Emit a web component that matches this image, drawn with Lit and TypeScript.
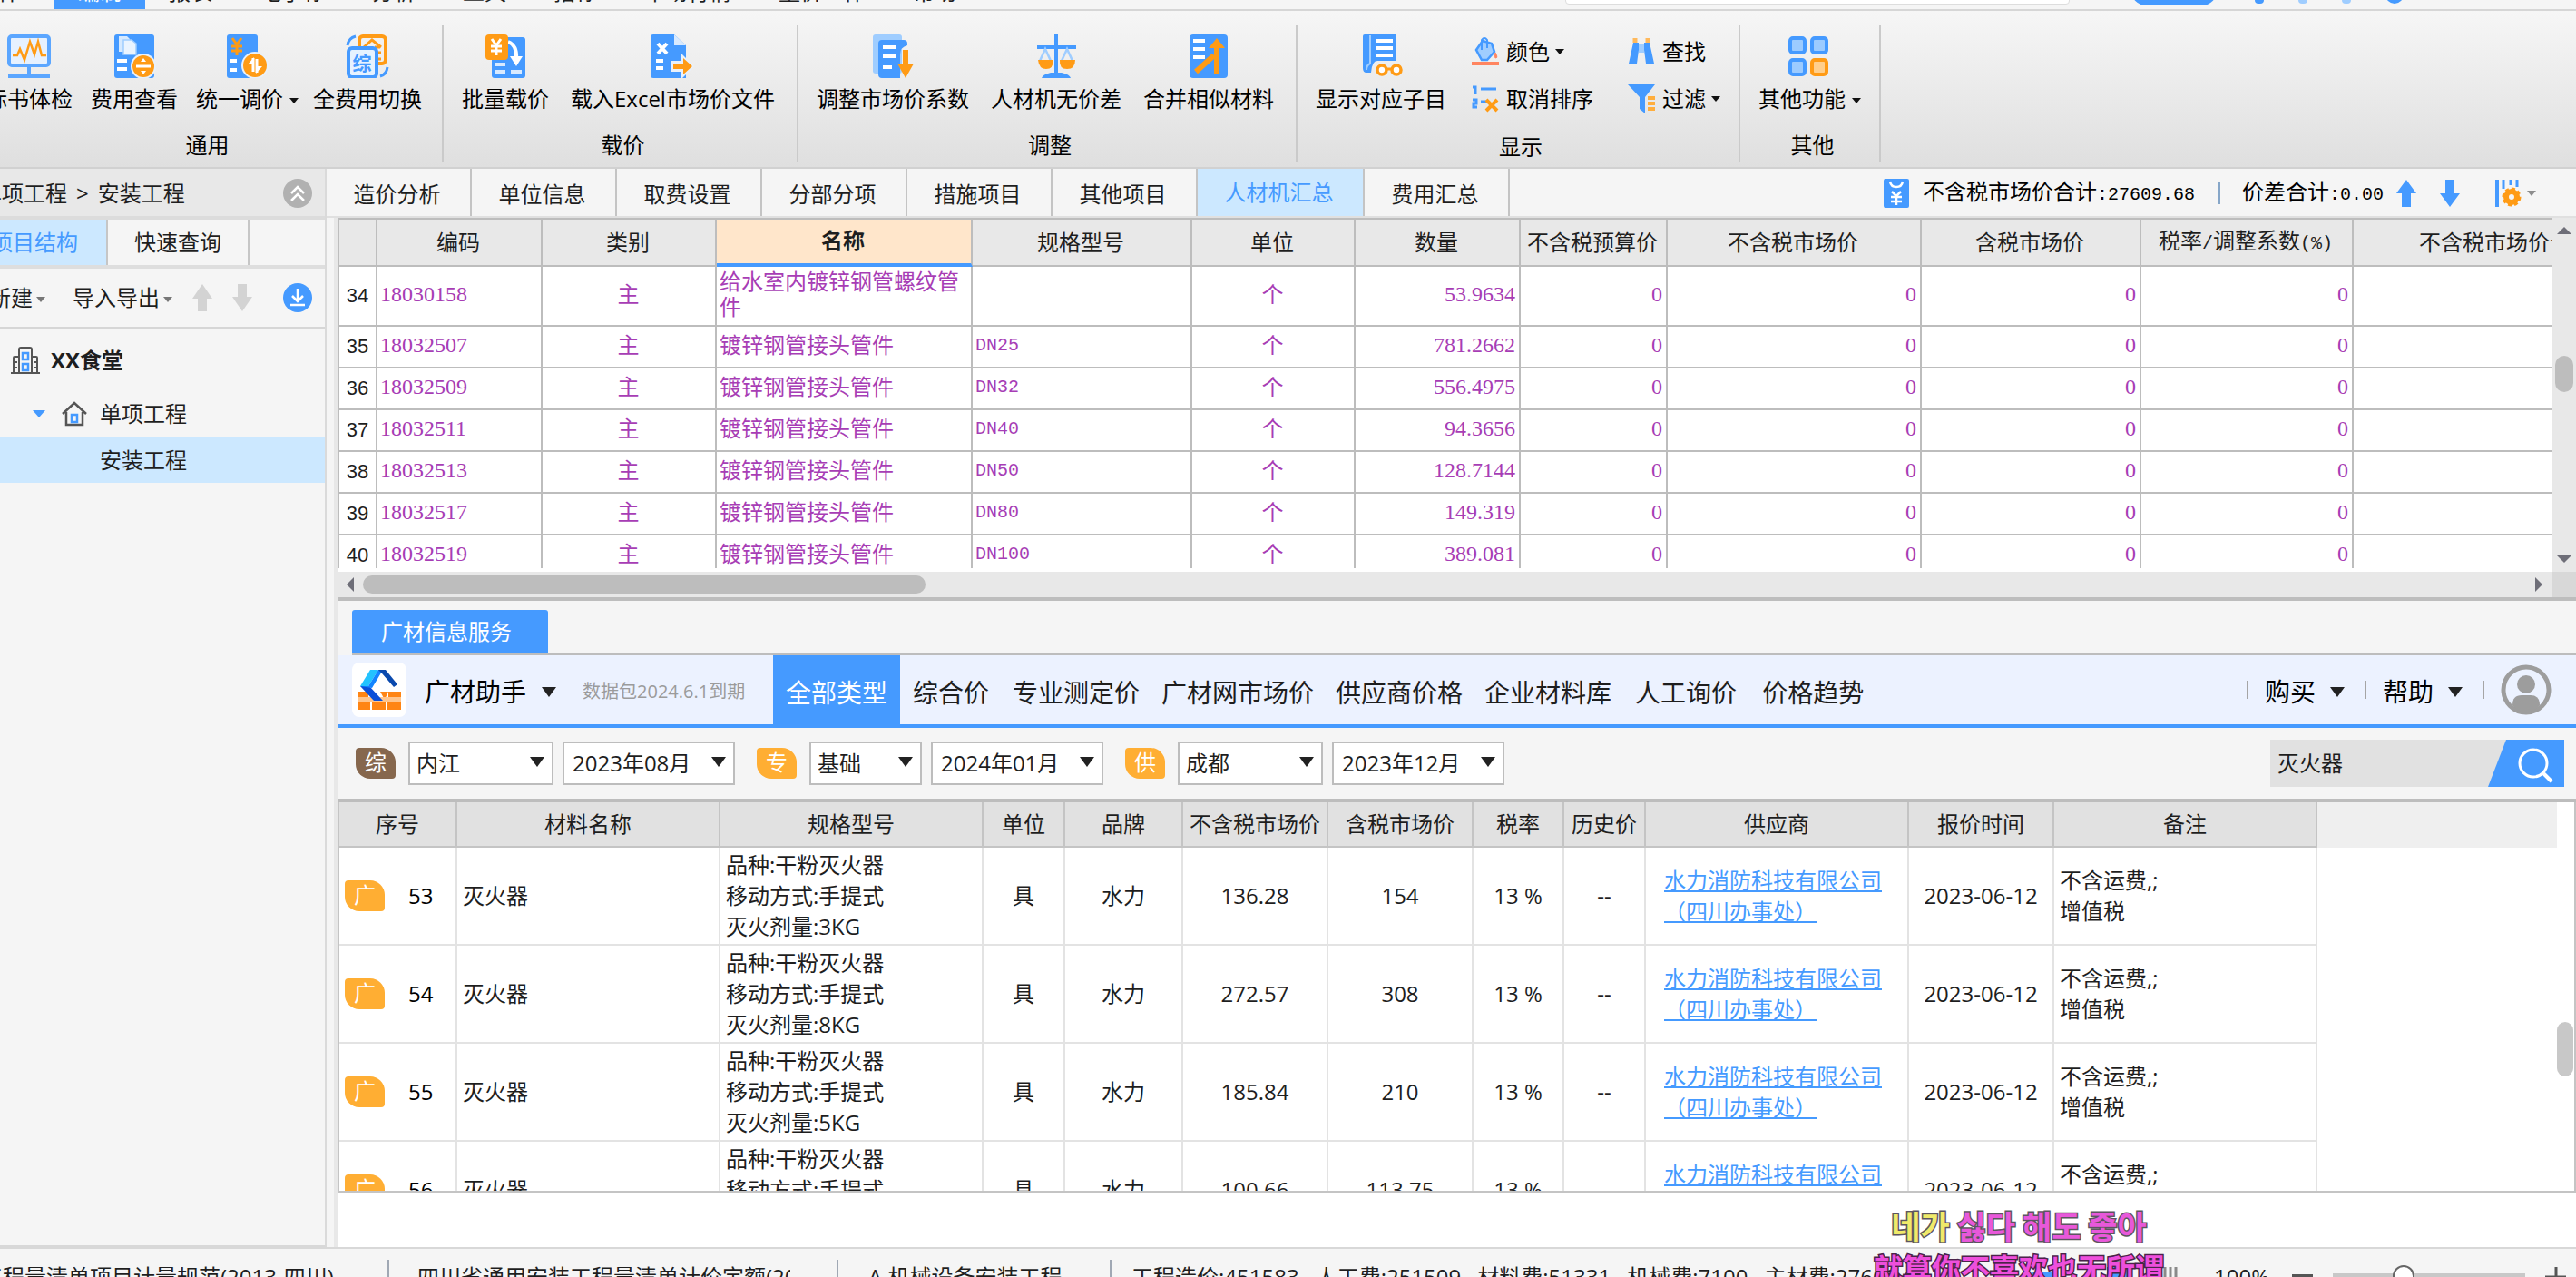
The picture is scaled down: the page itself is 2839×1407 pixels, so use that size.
import { LitElement, html, css, svg, nothing, TemplateResult } from "lit";
import { customElement } from "lit/decorators.js";
import { classMap } from "lit/directives/class-map.js";

const B = "#459aff";
const L = "#9fcdff";
const O = "#ff9b15";

const big = (body: TemplateResult) =>
  html`<svg class="ico" viewBox="0 0 48 48" width="48" height="48" aria-hidden="true">${body}</svg>`;

const ICONS: Record<string, TemplateResult> = {
  check: svg`<rect x="2" y="2" width="44" height="32" rx="3" fill="#e6f1ff" stroke="#5ba6ff" stroke-width="4"/>
    <path d="M6 23h5l3-7 5 12 6-20 5 14 4-14 4 15h5" fill="none" stroke="${O}" stroke-width="2.5"/>
    <path d="M24 36v10M1 46h46" stroke="#5ba6ff" stroke-width="4" fill="none"/>`,
  view: svg`<rect x="2" y="0" width="44" height="48" rx="3" fill="${B}"/>
    <path d="M7 2h9l3 3v14H7z" fill="#d5e9ff"/><path d="M12 6h9l5 4v12H12z" fill="#eaf4ff" stroke="${L}" stroke-width="1.5"/>
    <path d="M5 29h11M5 38h11" stroke="#fff" stroke-width="4"/>
    <circle cx="34" cy="35" r="14" fill="#e9f1fa"/><circle cx="34" cy="35" r="12" fill="${O}"/>
    <path d="M26 35h16" stroke="#fff" stroke-width="3"/><path d="M34 26l3 4h-6zM34 44l3-4h-6z" fill="#fff"/>`,
  unify: svg`<rect x="1" y="0" width="34" height="48" rx="3" fill="${B}"/>
    <path d="M7 4l5 7 5-7M12 11v12M6 13h12M6 18h12" fill="none" stroke="${O}" stroke-width="3"/>
    <path d="M5 29h7M5 39h7" stroke="#fff" stroke-width="4"/>
    <circle cx="32" cy="34" r="15" fill="#e9f1fa"/><circle cx="32" cy="34" r="13" fill="${O}"/>
    <path d="M30 26v15M34 42V27" stroke="#fff" stroke-width="3"/><path d="M31 25v8h-7zM33 43v-8h7z" fill="#fff"/>`,
  swap: svg`<rect x="15" y="2" width="29" height="30" rx="4" fill="none" stroke="${O}" stroke-width="4"/>
    <path d="M20 14l9-8 10 8M32 14h6M34 20h5M34 27h5" fill="none" stroke="${O}" stroke-width="3"/>
    <path d="M2 12Q3 4 11 2M46 36q-1 8-8 10" fill="none" stroke="${B}" stroke-width="3"/>
    <rect x="3" y="15" width="31" height="32" rx="4" fill="#e6f2ff" stroke="${B}" stroke-width="4"/>
    <text x="18" y="39" text-anchor="middle" font-size="21" font-weight="700" fill="${B}">综</text>`,
  batch: svg`<rect x="9" y="3" width="37" height="45" rx="3" fill="${B}"/>
    <path d="M12 33h12M12 41h12M30 41h12" stroke="#d8eaff" stroke-width="4"/>
    <path d="M27 8q10 4 9 18" fill="none" stroke="#fff" stroke-width="4"/><path d="M29 24h14l-7 11z" fill="#fff"/>
    <rect x="2" y="0" width="25" height="28" rx="4" fill="${O}"/>
    <path d="M9 5l5 7 5-7M14 12v11M8 13h12M8 18h12" fill="none" stroke="#fff" stroke-width="3"/>`,
  excel: svg`<path d="M3 0h23l13 12v36H3q-3 0-3-3V3q0-3 3-3z" fill="${B}"/><path d="M26 0l13 12H26z" fill="#d8eaff"/>
    <path d="M8 10l10 11M18 10L8 21" stroke="#fff" stroke-width="4"/>
    <path d="M6 29h8M6 37h8" stroke="#fff" stroke-width="4"/>
    <path d="M22 29h12v-8l14 14-14 14v-8H22z" fill="#e9f1fa"/><path d="M25 32h11v-6l10 9-10 9v-6H25z" fill="${O}"/>`,
  adjust: svg`<rect x="2" y="0" width="32" height="43" rx="3" fill="${L}"/><path d="M12 6h24q4 0 4 4v2q-8 2-8 10v26H12q-4 0-4-4V10q0-4 4-4z" fill="${B}"/>
    <path d="M13 14h14M13 24h14M13 36h10" stroke="#fff" stroke-width="4"/>
    <path d="M38 17v18" stroke="${O}" stroke-width="6"/><path d="M29 32h18l-9 16z" fill="${O}"/>`,
  scale: svg`<path d="M24 0v43M3 14h43" stroke="${B}" stroke-width="4"/><path d="M8 48q1-4 10-6h12q9 2 10 6z" fill="${B}"/>
    <path d="M6 29l6-13 6 13M30 29l6-13 6 13" fill="none" stroke="${L}" stroke-width="2.5"/>
    <path d="M4 28h17q0 10-8 10t-9-10zM28 28h17q0 10-9 10t-8-10z" fill="${O}"/>`,
  merge: svg`<rect x="3" y="0" width="42" height="48" rx="4" fill="${B}"/><path d="M7 7h13M7 16h13M7 25h13" stroke="#fff" stroke-width="4"/>
    <path d="M10 41l20-18M33 43V12" fill="none" stroke="${O}" stroke-width="6"/><path d="M24 15h18L33 4z" fill="${O}"/>`,
  book: svg`<path d="M6 0h34q1 0 1 2v27H20q-6 0-7 13H8q-4 0-4-5V2q0-2 2-2z" fill="${B}"/><path d="M12 1v31q-4 2-4 7" fill="none" stroke="${L}" stroke-width="2"/>
    <path d="M19 7h18M19 15h18M19 23h18" stroke="#fff" stroke-width="4"/>
    <circle cx="25" cy="39" r="5" fill="#fff" stroke="${O}" stroke-width="3.5"/><circle cx="41" cy="39" r="5" fill="#fff" stroke="${O}" stroke-width="3.5"/><path d="M29 38h8" stroke="${O}" stroke-width="3"/>`,
  more: svg`<g fill="#9ccbff" stroke="${B}" stroke-width="4"><rect x="3" y="4" width="16" height="16" rx="3"/><rect x="27" y="4" width="16" height="16" rx="3"/><rect x="3" y="28" width="16" height="16" rx="3"/></g>
    <rect x="27" y="28" width="16" height="16" rx="3" fill="#ffcf8c" stroke="${O}" stroke-width="4"/>`,
};

const SMALL: Record<string, TemplateResult> = {
  color: svg`<path d="M5 14L12 4l10 3 3 9-8 9h-6z" fill="${L}" stroke="${B}" stroke-width="2.5"/><path d="M11 14V3q3-4 6 0v9" fill="none" stroke="${B}" stroke-width="2"/><path d="M26 17q3 5 1 6-3 0-1-6" fill="#ff8560" stroke="#ff8560"/><path d="M0 29h30" stroke="#ff8560" stroke-width="4"/>`,
  sort: svg`<path d="M1 3h3v8M1 17h4v4H2v4h4M10 5h17M10 19h8" fill="none" stroke="${B}" stroke-width="3"/><path d="M16 17l12 12M28 17L16 29" stroke="${O}" stroke-width="4"/>`,
  find: svg`<path d="M8 1v5M22 1v5" stroke="#ffb95c" stroke-width="5"/><path d="M6 6h6v4h6V6h6l5 23h-9l-2-15h-6l-2 15H1z" fill="${B}"/><path d="M12 7h6v10h-6z" fill="${L}"/>`,
  filter: svg`<path d="M0 0h30L19 14v18l-6-5V14z" fill="${B}"/><path d="M22 15h8M22 21h8M22 27h8" stroke="#ffae3d" stroke-width="4"/>`,
};

const small = (name: string) =>
  html`<svg viewBox="0 0 30 32" width="30" height="32" aria-hidden="true">${SMALL[name]}</svg>`;

const caret = html`<i class="caret"></i>`;

interface Cmd { icon: string; label: string; drop?: boolean }
interface Group { name: string; cls: string; cmds: Cmd[]; small?: Cmd[][] }

const GROUPS: Group[] = [
  { name: "通用", cls: "first", cmds: [
    { icon: "check", label: "标书体检" }, { icon: "view", label: "费用查看" },
    { icon: "unify", label: "统一调价", drop: true }, { icon: "swap", label: "全费用切换" }] },
  { name: "载价", cls: "", cmds: [{ icon: "batch", label: "批量载价" }, { icon: "excel", label: "载入Excel市场价文件" }] },
  { name: "调整", cls: "", cmds: [
    { icon: "adjust", label: "调整市场价系数" }, { icon: "scale", label: "人材机无价差" }, { icon: "merge", label: "合并相似材料" }] },
  { name: "显示", cls: "", cmds: [{ icon: "book", label: "显示对应子目" }], small: [
    [{ icon: "color", label: "颜色", drop: true }, { icon: "sort", label: "取消排序" }],
    [{ icon: "find", label: "查找" }, { icon: "filter", label: "过滤", drop: true }]] },
  { name: "其他", cls: "", cmds: [{ icon: "more", label: "其他功能", drop: true }] },
];

const MENU = ["文件", "编制", "报表", "电子标", "分析", "工具", "指标", "市场行情", "量价一体", "帮助"];
const TABS = ["造价分析", "单位信息", "取费设置", "分部分项", "措施项目", "其他项目", "人材机汇总", "费用汇总"];

const COLS = [42, 182, 192, 282, 242, 180, 182, 162, 280, 242, 234, 340];
const HEADS = ["", "编码", "类别", "名称", "规格型号", "单位", "数量", "不含税预算价", "不含税市场价", "含税市场价"];
const ROWS: string[][] = [
  ["34", "18030158", "给水室内镀锌钢管螺纹管件", "", "53.9634"],
  ["35", "18032507", "镀锌钢管接头管件", "DN25", "781.2662"],
  ["36", "18032509", "镀锌钢管接头管件", "DN32", "556.4975"],
  ["37", "18032511", "镀锌钢管接头管件", "DN40", "94.3656"],
  ["38", "18032513", "镀锌钢管接头管件", "DN50", "128.7144"],
  ["39", "18032517", "镀锌钢管接头管件", "DN80", "149.319"],
  ["40", "18032519", "镀锌钢管接头管件", "DN100", "389.081"],
];

const PCOLS = [130, 290, 290, 90, 130, 160, 160, 100, 90, 290, 160, 290];
const PHEADS = ["序号", "材料名称", "规格型号", "单位", "品牌", "不含税市场价", "含税市场价", "税率", "历史价", "供应商", "报价时间", "备注"];
const PRICES = [
  ["53", "3KG", "136.28", "154"],
  ["54", "8KG", "272.57", "308"],
  ["55", "5KG", "185.84", "210"],
  ["56", "4KG", "100.66", "113.75"],
];
const TYPES = ["全部类型", "综合价", "专业测定价", "广材网市场价", "供应商价格", "企业材料库", "人工询价", "价格趋势"];
const FILTERS = [
  { tag: "综", name: "综合价", brown: true, w: 160, place: "内江", date: "2023年08月" },
  { tag: "专", name: "专业测定价", brown: false, w: 124, place: "基础", date: "2024年01月" },
  { tag: "供", name: "供应商", brown: false, w: 160, place: "成都", date: "2023年12月" },
];

@customElement("app-root")
export class AppRoot extends LitElement {
  static styles = css`
    :host { display: flex; flex-direction: column; height: 100vh; overflow: hidden; background: #f5f5f5; color: #1e1e1e;
      font: 24px/28px "Open Sans", "Noto Sans CJK SC", sans-serif; white-space: nowrap; }
    * { box-sizing: border-box; }
    button, input, select { font: inherit; color: inherit; background: none; border: 0; padding: 0; margin: 0; border-radius: 0; }
    a { color: inherit; text-decoration: none; }
    svg { display: block; flex: none; }
    table { border-collapse: separate; border-spacing: 0; table-layout: fixed; }
    th { font-weight: 400; }
    .caret { display: inline-block; border: 5px solid transparent; border-top: 6px solid #111; border-bottom: 0; margin-left: 7px; vertical-align: 4px; }

    .menu { flex: none; display: flex; height: 12px; overflow: hidden; border-bottom: 2px solid #d6d6d6; align-items: flex-end; }
    .menu a { padding: 0 26px 7px; line-height: 24px; }
    .menu a:first-child { margin-left: -52px; padding-right: 38px; }
    .menu a.on { background: #459aff; color: #fff; }
    .find { margin-left: auto; width: 556px; height: 40px; margin-bottom: 5px; background: #fff; border: 1px solid #ddd; border-radius: 4px; }
    .pill { margin: 0 42px 4px 68px; width: 94px; height: 40px; border-radius: 16px; background: #459aff; }
    .marks { display: flex; gap: 38px; margin: 0 190px 6px 0; align-items: flex-end; }
    .marks i { width: 10px; height: 8px; border-radius: 4px; background: #9fcdff; }
    .marks i:first-child { background: #459aff; }
    .marks i:last-child { width: 20px; height: 20px; border-radius: 10px; background: #459aff; }

    .ribbon { flex: none; display: flex; height: 174px; padding: 16px 0 6px; background: linear-gradient(#f6f6f6, #dfdfdf); border-bottom: 2px solid #d1d1d1; color: #000; }
    .group { border-right: 2px solid #cacaca; padding-top: 10px; flex: none; }
    .group.first { margin-left: -36px; }
    .cmds { display: flex; gap: 24px; padding: 0 24px 0 20px; }
    .first .cmds { gap: 20px; padding-right: 22px; }
    .cmd { display: flex; flex-direction: column; align-items: center; gap: 9px; }
    .cmd.drop, .mini.drop { margin-right: -4px; }
    .gname { text-align: center; padding: 23px 0 0 6px; }
    .minis { display: flex; flex-direction: column; gap: 20px; padding-top: 3px; margin-right: 14px; align-items: flex-start; }
    .cmd + .minis { margin-left: 4px; }
    .minis:last-child { margin-right: 0; }
    .mini { display: flex; align-items: center; gap: 8px; height: 32px; }
    .mini .caret { vertical-align: 6px; margin-left: 6px; }
    .ico text { font-family: "Noto Sans CJK SC", sans-serif; }

    .body { flex: 1; min-height: 0; display: flex; border-bottom: 2px solid #d8d8d8; }
    .side { flex: none; width: 360px; border-right: 2px solid #dadada; border-bottom: 2px solid #d8d8d8; display: flex; flex-direction: column; overflow: hidden; }
    .crumb { display: flex; align-items: center; justify-content: space-between; height: 56px; background: #e8e8e8; border-bottom: 4px solid #dcdcdc; padding: 2px 14px 0 0; }
    .crumb nav { margin-left: -22px; display: flex; gap: 10px; }
    .stabs { display: flex; height: 54px; border-bottom: 4px solid #dedede; }
    .stabs button { border-right: 2px solid #c6c6c6; width: 156px; }
    .stabs button.on { background: #cce8ff; color: #459aff; width: 119px; text-align: left; text-indent: -10px; }
    .tools { display: flex; align-items: center; height: 66px; border-bottom: 2px solid #d6d6d6; padding-right: 14px; }
    .tools .caret { border-top-color: #777; margin-left: 4px; }
    .tools button:first-child { margin-left: -12px; margin-right: 30px; }
    .tools .t1 { margin: 0 22px 0 22px; }
    .tools .t3 { margin-left: auto; }
    .tree { list-style: none; margin: 0; padding: 6px 0 0; }
    .tree li { display: flex; align-items: center; height: 58px; }
    .tree .r0 { padding-left: 12px; gap: 12px; font-weight: 700; }
    .tree .r1 { padding-left: 36px; gap: 14px; height: 56px; padding-top: 4px; }
    .tree .r1 svg:first-child { margin-right: 4px; }
    .tree .r2 { padding-left: 110px; background: #cce8ff; height: 50px; }

    .main { flex: 1; min-width: 0; display: flex; flex-direction: column; }
    .tabs { flex: none; display: flex; align-items: stretch; height: 54px; border-bottom: 2px solid #e0e0e0; }
    .tabs > button { width: 160px; border-right: 2px solid #c4c4c4; padding: 3px 3px 0 0; flex: none; }
    .tabs > button.on { width: 184px; background: #cce8ff; color: #459aff; padding-top: 0; }
    .sum { margin-left: auto; display: flex; align-items: center; padding-right: 44px; color: #000; padding-top: 2px; }
    .sum .v { margin: 0 14px 0 24px; }
    .sum .v.a { margin: 0 26px 0 15px; }
    .bar { width: 2px; height: 24px; background: #86a6c8; }
    .m { font-family: "Liberation Mono", monospace; font-size: 20px; }
    .d { font-family: "Liberation Serif", serif; }
    .work { flex: 1; min-height: 0; display: flex; padding-left: 8px; }
    .panes { flex: 1; min-width: 0; display: flex; flex-direction: column; border-left: 4px solid #e8e8e8; }

    .upper { flex: none; display: grid; grid-template-columns: minmax(0, 1fr) 27px; grid-template-rows: 390px 28px; border-bottom: 4px solid #bdbdbd; }
    .gridbox { background: #fff; padding-bottom: 4px; min-width: 0; }
    .grid { height: 386px; overflow: hidden; border-top: 2px solid #bdbdbd; border-left: 2px solid #bdbdbd; }
    .grid table { width: 2560px; }
    .grid th { height: 52px; background: #e8e8e8; border-right: 2px solid #bdbdbd; border-bottom: 2px solid #bdbdbd; padding: 0 2px 0 0; }
    .grid th.on { background: #ffe6cb; font-weight: 700; border-bottom: 4px solid #459aff; padding-bottom: 2px; }
    .grid td { height: 46px; border-right: 2px solid #bdbdbd; border-bottom: 2px solid #bdbdbd; padding: 0 4px 4px 3px; color: #a73db5; }
    .grid tr.tall td { height: 66px; white-space: normal; }
    .grid td.n { text-align: center; color: #1e1e1e; font: 22px/28px "Liberation Sans", sans-serif; padding: 0; }
    .grid td.m { padding-bottom: 2px; }
    .c { text-align: center; }
    .grid td.r { text-align: right; }
    .vs { background: #e8e8e8; display: flex; flex-direction: column; align-items: center; justify-content: space-between; padding: 10px 0; }
    .vs i { width: 20px; height: 40px; border-radius: 10px; background: #bdbdbd; margin-bottom: 46px; }
    .hs { background: #e8e8e8; display: flex; align-items: center; padding: 0 10px; }
    .hs i { width: 620px; height: 20px; border-radius: 10px; background: #bdbdbd; margin: 0 auto 0 10px; }
    .corner { background: #d8d8d8; }

    .svc { flex: none; padding: 10px 0 0 16px; }
    .svc div { border-bottom: 2px solid #bdbdbd; }
    .svc button { display: block; width: 216px; height: 48px; background: #459aff; color: #fff; border-radius: 3px 3px 0 0; padding-right: 8px; }
    .helper { flex: none; display: flex; align-items: center; height: 80px; background: #ecf2ff; border-bottom: 4px solid #459aff; padding: 0 27px 0 16px; font-size: 28px; color: #000; }
    .big { display: inline-block; border: 8px solid transparent; border-top: 11px solid #222; border-bottom: 0; margin-left: 17px; vertical-align: 5px; }
    .helper .name { margin-left: 20px; padding-top: 4px; }
    .exp { color: #9b9b9b; font-size: 20px; width: 210px; margin-left: 29px; padding-top: 3px; }
    .types { display: flex; align-self: stretch; margin-bottom: -4px; color: #1e1e1e; }
    .types a { padding: 3px 14px 0; line-height: 76px; }
    .types a.w { padding: 3px 12px 0; }
    .types a.on { background: #459aff; color: #fff; }
    .acct { margin-left: auto; display: flex; align-items: center; }
    .acct .s { width: 2px; height: 20px; background: #a5a5a5; margin-right: 18px; }
    .acct button { margin-right: 22px; padding-top: 3px; }
    .acct .big { margin-left: 16px; }

    .filters { flex: none; display: flex; align-items: center; height: 82px; border-bottom: 4px solid #bdbdbd; padding: 0 13px 0 20px; }
    .tag { display: inline-block; width: 44px; height: 34px; line-height: 32px; text-align: center; border-radius: 4px 16px 4px 16px; background: #ffae33; color: #fff; }
    .tag.brown { background: #86674d; }
    .filters .tag { margin-right: 14px; }
    .sel { position: relative; margin-right: 10px; height: 48px; }
    .sel.end { margin-right: 24px; }
    .sel select { appearance: none; width: 100%; height: 48px; border: 2px solid #bdbdbd; background: #fff; padding: 0 0 0 7px; }
    .sel.end select { padding-left: 9px; }
    .sel::after { content: ""; position: absolute; right: 10px; top: 17px; border: 8px solid transparent; border-top: 11px solid #222; border-bottom: 0; pointer-events: none; }
    .search { margin-left: auto; display: flex; width: 324px; height: 52px; background: #e1e1e1; }
    .search input { flex: 1; min-width: 0; padding-left: 8px; outline: 0; }
    .search button { width: 84px; }

    .prices { flex: 1; min-height: 0; overflow: hidden; display: flex; background: #fff; border-left: 2px solid #c4c4c4; border-right: 2px solid #c4c4c4; border-bottom: 2px solid #c4c4c4; margin-bottom: 60px; }
    .plist { flex: 1; min-width: 0; }
    .plist .hd { background: #efefef; height: 50px; }
    .plist table { width: 2180px; }
    .plist th { height: 50px; padding: 0; background: #e1e1e1; border-right: 2px solid #c4c4c4; border-bottom: 2px solid #c4c4c4; }
    .plist td { height: 108px; padding: 0 6px; line-height: 34px; border-right: 2px solid #e3e3e3; border-bottom: 2px solid #e3e3e3; }
    .plist td.c { text-align: center; padding: 0; }
    .plist td.sup { padding-left: 20px; white-space: normal; }
    .plist td.sup a { color: #459aff; text-decoration: underline; text-decoration-thickness: 2px; text-underline-offset: 2px; }
    .no { display: flex; align-items: center; gap: 26px; color: #000; }
    .ptrack { width: 19px; flex: none; padding-top: 242px; }
    .ptrack i { display: block; width: 18px; height: 60px; border-radius: 9px; background: #c8c8c8; }
    .lowwrap { flex: 1; min-height: 0; display: flex; flex-direction: column; background: #fff; }

    .status { flex: none; height: 31px; overflow: hidden; display: flex; align-items: flex-start; padding-top: 17px; }
    .status > span { flex: none; }
    .status .s { width: 2px; height: 30px; background: #a0a8b4; margin-top: -5px; }
    .status .a { width: 448px; margin-left: -21px; }
    .status .b { width: 411px; overflow: hidden; margin: 0 51px 0 31px; }
    .status .k { width: 214px; margin: 0 52px 0 33px; }
    .status .e { display: flex; gap: 18px; margin-left: 22px; }
    .zoomer { margin-left: auto; display: flex; padding-right: 11px; }
    .zoomer .i1 { margin: 3px 40px 0 0; }
    .zoomer svg { margin-top: 1px; }
    .zoomer label { margin-right: 25px; }
    .zoomer input { appearance: none; width: 212px; height: 24px; margin: 1px 22px 0; background: linear-gradient(#c8c8c8, #c8c8c8) 0 9px / 100% 6px no-repeat; }
    .zoomer input::-webkit-slider-thumb { appearance: none; width: 24px; height: 24px; border-radius: 12px; background: #fff; border: 2px solid #666; }

    .lyrics { position: absolute; right: 454px; bottom: -12px; text-align: center; font-weight: 700; font-size: 32px; line-height: 42px; color: #e858da; paint-order: stroke fill; -webkit-text-stroke: 3px #5d5560; pointer-events: none; }
    .lyrics .ko { display: block; font-family: "Noto Sans CJK KR", sans-serif; font-size: 35px; margin-bottom: 6px; }
    .lyrics .y { color: #f0ea6a; }
    .lyrics .zh { display: block; color: #ee4fdc; -webkit-text-stroke-color: #4a2449; }
  `;

  private cmd(c: Cmd) {
    return html`<button class=${classMap({ cmd: true, drop: !!c.drop })}>${big(ICONS[c.icon])}<span>${c.label}${c.drop ? caret : nothing}</span></button>`;
  }

  private ribbon() {
    return html`<div class="ribbon">${GROUPS.map((g) => html`<section class="group ${g.cls}">
      <div class="cmds">${g.cmds.map((c) => this.cmd(c))}
        ${g.small?.map((col) => html`<div class="minis">${col.map((c) => html`<button class=${classMap({ mini: true, drop: !!c.drop })}>${small(c.icon)}<span>${c.label}${c.drop ? caret : nothing}</span></button>`)}</div>`)}
      </div>
      <div class="gname">${g.name}</div></section>`)}</div>`;
  }

  private side() {
    return html`<aside class="side">
      <div class="crumb"><nav><span>单项工程</span><span>&gt;</span><span>安装工程</span></nav>
        <button aria-label="收起"><svg width="32" height="32" viewBox="0 0 32 32"><circle cx="16" cy="16" r="16" fill="#b1b1b1"/><path d="M9 16l7-7 7 7M9 24l7-7 7 7" fill="none" stroke="#fff" stroke-width="2.5"/></svg></button></div>
      <div class="stabs"><button class="on">项目结构</button><button>快速查询</button></div>
      <div class="tools"><button>新建${caret}</button><button>导入导出${caret}</button>
        <button class="t1" aria-label="上移"><svg width="22" height="30" viewBox="0 0 22 30"><path d="M11 0l11 16h-6v14H6V16H0z" fill="#d3d3d3"/></svg></button>
        <button aria-label="下移"><svg width="22" height="30" viewBox="0 0 22 30"><path d="M11 30L0 14h6V0h10v14h6z" fill="#d3d3d3"/></svg></button>
        <button class="t3" aria-label="下载"><svg width="32" height="32" viewBox="0 0 32 32"><circle cx="16" cy="16" r="16" fill="${B}"/><path d="M16 6v14M10 14l6 6 6-6M8 24h16" fill="none" stroke="#fff" stroke-width="2.5"/></svg></button></div>
      <ul class="tree">
        <li class="r0"><svg width="32" height="32" viewBox="0 0 32 32"><g fill="none" stroke="#555" stroke-width="2"><path d="M9 30V4q0-2 2-2h10q2 0 2 2v26M9 12H4q-1 0-1 1v17M23 12h5q1 0 1 1v17M0 30h32M3 18h4M3 24h4M25 18h4M25 24h4"/></g><g fill="none" stroke="${B}" stroke-width="2.5"><path d="M13 8h6v7h-6zM13 20h6v7h-6z"/></g></svg><span>XX食堂</span></li>
        <li class="r1"><svg width="14" height="8" viewBox="0 0 14 8"><path d="M0 0h14L7 8z" fill="${B}"/></svg><svg width="28" height="28" viewBox="0 0 28 28"><path d="M1 14L14 2l13 12M5 12v14h18V12" fill="none" stroke="#555" stroke-width="2.5"/><path d="M11 15h6v8h-6z" fill="none" stroke="${B}" stroke-width="2.5"/></svg><span>单项工程</span></li>
        <li class="r2">安装工程</li>
      </ul></aside>`;
  }

  private tabs() {
    return html`<div class="tabs">${TABS.map((t) => html`<button class=${t === "人材机汇总" ? "on" : ""}>${t}</button>`)}
      <div class="sum">
        <svg width="28" height="32" viewBox="0 0 28 32"><rect width="28" height="32" rx="2" fill="${B}"/><path d="M7 3q1 6 7 6t7-6" fill="none" stroke="#fff" stroke-width="2.5"/><path d="M9 14l5 5 5-5M14 19v10M8 20h12M8 25h12" fill="none" stroke="#fff" stroke-width="2.5"/></svg>
        <span class="v a">不含税市场价合计<span class="m">:27609.68</span></span><i class="bar"></i>
        <span class="v">价差合计<span class="m">:0.00</span></span>
        <svg width="22" height="30" viewBox="0 0 22 30"><path d="M11 0l11 15h-6v15H6V15H0z" fill="${B}"/></svg>
        <svg width="74" height="30" viewBox="0 0 74 30"><path d="M37 30L26 15h6V0h10v15h6z" fill="${B}"/></svg>
        <svg width="48" height="32" viewBox="0 0 48 32"><path d="M15 1v30" stroke="${B}" stroke-width="4"/><path d="M22 1v10M30 1v6M37 1v8" stroke="${B}" stroke-width="3"/><circle cx="31" cy="20" r="6" fill="none" stroke="${O}" stroke-width="6"/><circle cx="31" cy="20" r="9" fill="none" stroke="${O}" stroke-width="3" stroke-dasharray="4 3"/></svg>
        <svg width="10" height="6" viewBox="0 0 10 6"><path d="M0 0h10L5 6z" fill="#8d8d8d"/></svg>
      </div></div>`;
  }

  private upper() {
    const tri = (d: string, w: number, h: number) => html`<svg width=${w} height=${h} viewBox="0 0 ${w} ${h}"><path d=${d} fill="#6e6e78"/></svg>`;
    return html`<div class="upper">
      <div class="gridbox"><div class="grid"><table>
        <colgroup>${COLS.map((w) => html`<col style="width:${w}px">`)}</colgroup>
        <thead><tr>${HEADS.map((h) => html`<th class=${h === "名称" ? "on" : ""}>${h}</th>`)}<th>税率<span class="m">/</span>调整系数<span class="m">(%)</span></th><th>不含税市场价合计</th></tr></thead>
        <tbody>${ROWS.map((r, i) => html`<tr class=${i ? "" : "tall"}><td class="n">${r[0]}</td><td class="d">${r[1]}</td><td class="c">主</td><td>${r[2]}</td><td class="m">${r[3]}</td><td class="c">个</td><td class="d r">${r[4]}</td>${[0, 1, 2, 3].map(() => html`<td class="d r">0</td>`)}<td></td></tr>`)}</tbody>
      </table></div></div>
      <div class="vs">${tri("M0 8L8 0l8 8z", 16, 8)}<i></i>${tri("M0 0h16L8 8z", 16, 8)}</div>
      <div class="hs">${tri("M8 0v16L0 8z", 8, 16)}<i></i>${tri("M0 0l8 8-8 8z", 8, 16)}</div>
      <div class="corner"></div></div>`;
  }

  private helper() {
    const tri = html`<i class="big"></i>`;
    return html`<div class="svc"><div><button>广材信息服务</button></div></div>
      <div class="helper">
        <svg width="60" height="60" viewBox="0 0 60 60"><rect width="60" height="60" rx="8" fill="#fff"/>
          <path d="M6 32h12v9H6zM40 32h14v9H40zM6 43h14v9H6zM22 43h15v9H22zM39 43h15v9H39z" fill="#ff8514"/>
          <path d="M31 32h9l-4 9z" fill="#ff8514"/><path d="M6 38h48v5H6z" fill="#ffc58c"/>
          <path d="M20 8h9L18 26H9z" fill="#22c3ff"/><path d="M9 26h10l15 16H24z" fill="#0b4fd8"/>
          <path d="M9 26l9 0L29 8h5L22 28z" fill="#1284ff"/><path d="M29 8h8l13 16-4 3L33 12z" fill="#0a49ae"/></svg>
        <button class="name">广材助手${tri}</button><span class="exp">数据包2024.6.1到期</span>
        <nav class="types">${TYPES.map((t, i) => html`<a href="#" class=${classMap({ on: i === 0, w: t.length > 4 })}>${t}</a>`)}</nav>
        <div class="acct"><i class="s"></i><button>购买${tri}</button><i class="s"></i><button>帮助${tri}</button><i class="s"></i>
          <svg width="56" height="56" viewBox="0 0 56 56" role="img" aria-label="账户"><circle cx="28" cy="28" r="25" fill="#ecf2ff" stroke="#9d9d9d" stroke-width="5"/><circle cx="28" cy="22" r="10" fill="#9d9d9d"/><path d="M13 45q0-11 10-11h10q10 0 10 11-7 8-15 8t-15-8z" fill="#9d9d9d"/></svg></div>
      </div>`;
  }

  private filters() {
    return html`<div class="filters">${FILTERS.map((f) => html`<span class=${classMap({ tag: true, brown: f.brown })}>${f.tag}</span>
        <div class="sel" style="width:${f.w}px"><select aria-label="${f.name}地区"><option>${f.place}</option></select></div>
        <div class="sel end" style="width:190px"><select aria-label="${f.name}日期"><option>${f.date}</option></select></div>`)}
      <div class="search"><input type="text" aria-label="搜索材料" .value=${"灭火器"}><button aria-label="搜索">
        <svg width="84" height="52" viewBox="0 0 84 52"><path d="M20 0h64v52H0z" fill="${B}"/><circle cx="50" cy="26" r="15" fill="none" stroke="#fff" stroke-width="3"/><path d="M61 37l9 9" stroke="#fff" stroke-width="4"/></svg></button></div>
    </div>`;
  }

  private prices() {
    return html`<div class="lowwrap"><div class="prices"><div class="plist"><div class="hd"><table>
      <colgroup>${PCOLS.map((w) => html`<col style="width:${w}px">`)}</colgroup>
      <thead><tr>${PHEADS.map((h) => html`<th>${h}</th>`)}</tr></thead>
      <tbody>${PRICES.map(([n, kg, a, b]) => html`<tr><td><div class="no"><span class="tag">广</span>${n}</div></td><td>灭火器</td>
        <td>品种:干粉灭火器<br>移动方式:手提式<br>灭火剂量:${kg}</td><td class="c">具</td><td class="c">水力</td><td class="c">${a}</td><td class="c">${b}</td><td class="c">13 %</td><td class="c">--</td>
        <td class="sup"><a href="#">水力消防科技有限公司<br>（四川办事处）</a></td><td class="c">2023-06-12</td><td>不含运费,;<br>增值税</td></tr>`)}</tbody></table></div></div>
      <div class="ptrack"><i></i></div></div></div>`;
  }

  render() {
    return html`<nav class="menu">${MENU.map((m, i) => html`<a href="#" class=${i === 1 ? "on" : ""}>${m}</a>`)}
        <span class="find"></span><span class="pill"></span><span class="marks"><i></i><i></i><i></i><i></i></span></nav>
      ${this.ribbon()}
      <div class="body">${this.side()}
        <main class="main">${this.tabs()}<div class="work"><div class="panes">${this.upper()}${this.helper()}${this.filters()}${this.prices()}</div></div></main></div>
      <footer class="status"><span class="a">工程量清单项目计量规范(2013-四川)</span><i class="s"></i><span class="b">四川省通用安装工程量清单计价定额(2020)</span><i class="s"></i><span class="k">A.机械设备安装工程</span><i class="s"></i>
        <span class="e"><span>工程造价:451583</span><span>人工费:251509</span><span>材料费:51331</span><span>机械费:7100</span><span>主材费:27609.68</span></span>
        <div class="zoomer"><svg class="i1" width="160" height="24" viewBox="0 0 160 24"><path d="M0 6h22v16H0zM82 0h24v22H82z" fill="${B}"/><path d="M146 0v22M152 0v22M158 0v22" stroke="#8a8a8a" stroke-width="3"/></svg>
          <label for="zoom">100%</label><svg width="23" height="24" viewBox="0 0 23 24"><path d="M0 12h23" stroke="#555" stroke-width="4"/></svg><input id="zoom" type="range" min="0" max="100" .value=${"35"}><svg width="23" height="24" viewBox="0 0 23 24"><path d="M0 13h23M12 2v22" stroke="#555" stroke-width="3"/></svg></div></footer>
      <div class="lyrics"><span class="ko"><span class="y">네가</span> 싫다 해도 좋아</span><span class="zh">就算你不喜欢也无所谓</span></div>`;
  }
}
